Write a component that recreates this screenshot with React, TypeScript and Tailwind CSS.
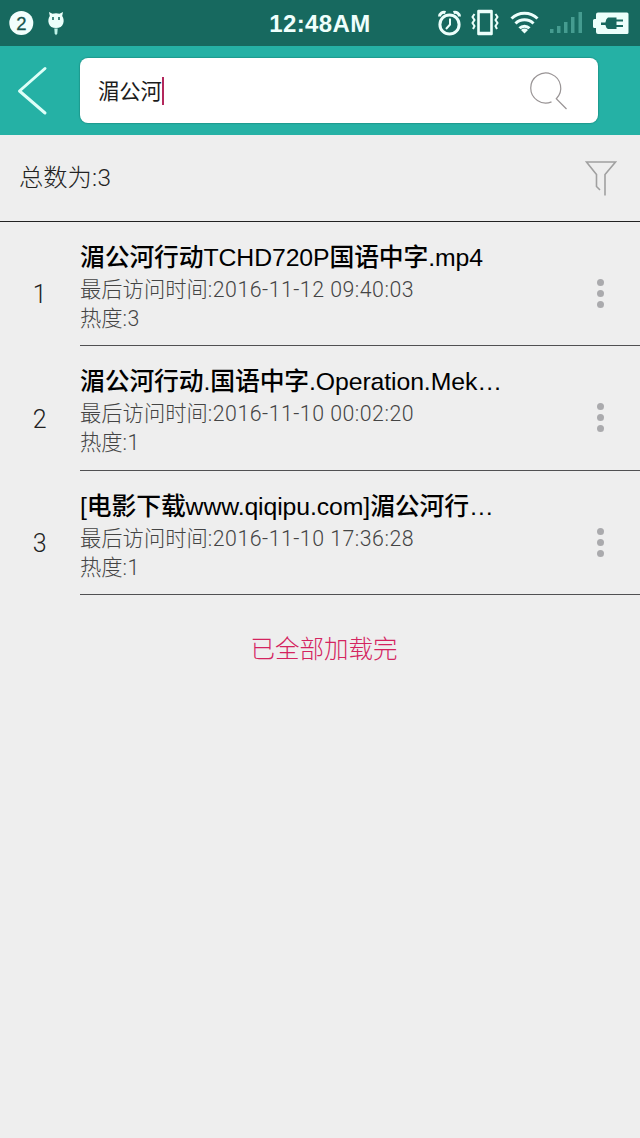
import type { ReactNode } from 'react';

type Item = {
  id: number;
  title: string;
  visited: string;
  heat: number;
  height: string;
};

const items: Item[] = [
  {
    id: 1,
    title: '湄公河行动TCHD720P国语中字.mp4',
    visited: '2016-11-12 09:40:03',
    heat: 3,
    height: 'h-[124px]',
  },
  {
    id: 2,
    title: '湄公河行动.国语中字.Operation.Mek…',
    visited: '2016-11-10 00:02:20',
    heat: 1,
    height: 'h-[125px]',
  },
  {
    id: 3,
    title: '[电影下载www.qiqipu.com]湄公河行…',
    visited: '2016-11-10 17:36:28',
    heat: 1,
    height: 'h-[124px]',
  },
];

function StatusIcons() {
  return (
    <svg width="210" height="46" viewBox="430 0 210 46" fill="none" stroke="#ecfffb">
      {/* alarm */}
      <circle cx="449.5" cy="24.5" r="9.6" strokeWidth="3" />
      <path d="M450 18.500V24.500L446 29" strokeWidth="2" />
      <path d="M439.500 16.500a4.500 4.500 0 0 1 6-4M459.500 16.500a4.500 4.500 0 0 0-6-4" strokeWidth="3" />
      {/* vibrate */}
      <rect x="478.5" y="11.500" width="13" height="22" strokeWidth="2.600" />
      <path d="M478 11.500h14M478 33.500h14" strokeWidth="3.600" />
      <path d="M474.500 14l-2 3 2 3-2 3 2 3-1.500 3M495.500 14l2 3-2 3 2 3-2 3 1.500 3" strokeWidth="2" />
      {/* wifi */}
      <path d="M511.500 18.500a18.500 18.500 0 0 1 26 0M515.500 23.500a12.700 12.700 0 0 1 18 0M519.500 28.300a7 7 0 0 1 10 0" strokeWidth="3" />
      <path d="M524.500 33.500l-3.500-3.500a5 5 0 0 1 7 0z" fill="#ecfffb" stroke="none" />
      {/* signal */}
      <g fill="#459c90" stroke="none">
        <rect x="550" y="29" width="3.500" height="4" />
        <rect x="557" y="26" width="3.500" height="7" />
        <rect x="564" y="22" width="3.500" height="11" />
        <rect x="571" y="17" width="3.500" height="16" />
        <rect x="578.500" y="12" width="3.500" height="21" />
      </g>
      {/* battery */}
      <path d="M598 12.500h29a1.500 1.500 0 0 1 1.500 1.500v18.500a1.500 1.500 0 0 1-1.500 1.500h-29a2 2 0 0 1-2-2v-4h-1.500a1.500 1.500 0 0 1-1.500-1.500v-6a1.500 1.500 0 0 1 1.500-1.500h1.500v-4.500a2 2 0 0 1 2-2z" fill="#ecfffb" stroke="none" />
      <path d="M608 17.500h8.500v11.500H608q-2-1-2.600-4H601v-2.500h4.400q.6-4 2.600-5z" fill="#17695f" stroke="none" />
      <path d="M616 20.500h7M616 26h7" stroke="#17695f" strokeWidth="2" />
    </svg>
  );
}

function StatusBar() {
  return (
    <div className="grid h-[46px] grid-cols-[1fr_auto_1fr] items-center bg-[#17695f]">
      <svg width="80" height="46" viewBox="0 0 80 46">
        <circle cx="21.300" cy="23" r="12" fill="#f2fffd" />
        <text x="21.300" y="29.500" textAnchor="middle" fontSize="18.500" fill="#17554d" stroke="#17554d" strokeWidth="0.300">2</text>
        <path d="M49 12l3.500 1.800q3.500-1.200 7 0L63 12l-.8 4q2.300 3.500 1 7.500-1.500 4.500-7.200 4.500t-7.200-4.500q-1.300-4 1-7.500z" fill="#ecfffb" />
        <path d="M53 17v3M59 17v3" stroke="#17695f" strokeWidth="1.600" />
        <path d="M54.300 28.500h3.400l-.4 5-1.300 1.800-1.300-1.800z" fill="#bdf3e7" />
      </svg>
      <span className="pt-[2px] text-[24px] leading-none font-bold tracking-[0.4px] text-[#effffc]">12:48AM</span>
      <div className="justify-self-end">
        <StatusIcons />
      </div>
    </div>
  );
}

function SearchHeader() {
  return (
    <header className="flex h-[89px] items-center bg-[#25b1a5]">
      <svg width="80" height="89" viewBox="0 46 80 89" fill="none">
        <path d="M45 68.500L19.500 91L45 113" stroke="#ddfff8" strokeWidth="3" strokeLinecap="round" strokeLinejoin="round" />
      </svg>
      <div className="flex h-[65px] w-[518px] items-center justify-between rounded-lg bg-white pr-[28px] pl-[18px] shadow-[0_0_1px_1px_rgba(20,120,110,0.4)]">
        <div className="flex items-center">
          <span className="pt-[2px] text-[21.300px] leading-[28px] text-[#1c1c1c]">湄公河</span>
          <span className="h-[28px] w-[2px] bg-[#b3285c]" />
        </div>
        <svg width="42" height="42" viewBox="528 69.500 42 42" fill="none" stroke="#999495" strokeWidth="1.200">
          <path d="M551.500 101.400A15 15 0 1 1 556.300 98.200L566.500 108.500" />
        </svg>
      </div>
    </header>
  );
}

function Thin({ children }: { children: ReactNode }) {
  return <span className="font-['Roboto'] font-light tracking-[0.5px]">{children}</span>;
}

function Summary({ total }: { total: number }) {
  return (
    <div className="flex h-[87px] items-center justify-between border-b border-[#222] pr-[22px] pl-[19px]">
      <span className="pt-px text-[24.300px] font-light text-[#222]">
        总数为<Thin>:{total}</Thin>
      </span>
      <svg width="34" height="38" viewBox="584 160 34 38" fill="none" stroke="#a0a0a0" strokeWidth="1.600">
        <path d="M600 191l-3.500-3.500V175.500L586.500 163H615.500L605 175.500V196.500" />
      </svg>
    </div>
  );
}

function ResultRow({ item }: { item: Item }) {
  return (
    <li className={`flex ${item.height}`}>
      <div className="flex w-[80px] items-center justify-center pt-[22px] text-[25px] text-[#222]">
        <Thin>{item.id}</Thin>
      </div>
      <div className="flex flex-1 justify-between border-b border-[#505052] pt-[18px]">
        <div className="whitespace-nowrap">
          <h2 className="h-[35px] text-[24.800px] leading-[36px] font-medium tracking-[-0.1px] text-black">{item.title}</h2>
          <p className="h-[29px] text-[21.300px] leading-[29px] font-light text-[#444]">
            最后访问时间<Thin>:{item.visited}</Thin>
          </p>
          <p className="h-[29px] text-[21.300px] leading-[29px] font-light text-[#444]">
            热度<Thin>:{item.heat}</Thin>
          </p>
        </div>
        <div className="mr-[36px] flex flex-col items-center gap-[4px] pt-[39px]">
          <span className="size-[7px] rounded-full bg-[#aaaaad]" />
          <span className="size-[7px] rounded-full bg-[#aaaaad]" />
          <span className="size-[7px] rounded-full bg-[#aaaaad]" />
        </div>
      </div>
    </li>
  );
}

export default function App() {
  return (
    <main className="h-[1138px] w-[640px] overflow-hidden bg-[#eeeeee] font-['Liberation_Sans','Noto_Sans_CJK_SC',sans-serif]">
      <StatusBar />
      <SearchHeader />
      <Summary total={items.length} />
      <ul>
        {items.map((item) => (
          <ResultRow key={item.id} item={item} />
        ))}
      </ul>
      <p className="pt-[37px] pl-[8px] text-center text-[24.500px] leading-[36px] font-light text-[#d4245f]">已全部加载完</p>
    </main>
  );
}
